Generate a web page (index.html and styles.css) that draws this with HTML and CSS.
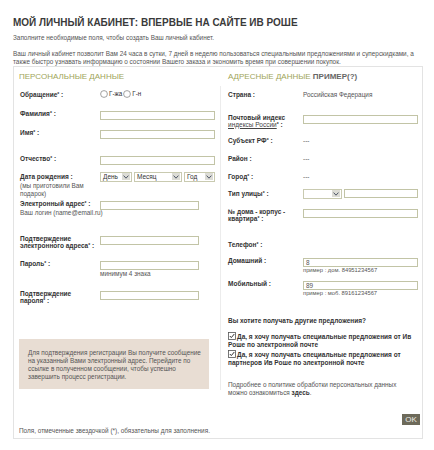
FILE: index.html
```html
<!DOCTYPE html>
<html lang="ru">
<head>
<meta charset="utf-8">
<title>Мой личный кабинет</title>
<link rel="stylesheet" href="styles.css">
</head>
<body>
<div class="page">
  <h1 class="title">МОЙ ЛИЧНЫЙ КАБИНЕТ: ВПЕРВЫЕ НА САЙТЕ ИВ РОШЕ</h1>
  <p class="lead">Заполните необходимые поля, чтобы создать Ваш личный кабинет.</p>
  <p class="intro">Ваш личный кабинет позволит Вам 24 часа в сутки, 7 дней в неделю пользоваться специальными предложениями и суперскидками, а<br>также быстро узнавать информацию о состоянии Вашего заказа и экономить время при совершении покупок.</p>
  <form class="card">
    <div class="heads">
      <h2 class="sec sec-left">ПЕРСОНАЛЬНЫЕ ДАННЫЕ</h2>
      <h2 class="sec sec-right">АДРЕСНЫЕ ДАННЫЕ <span class="sec-ex">ПРИМЕР(?)</span></h2>
    </div>
    <div class="cols">
      <div class="col col-left">
        <div class="row r-sal">
          <div class="lbl">Обращение<span class="req">*</span> :</div>
          <div class="radios">
            <span class="radio"><svg width="8" height="8" viewBox="0 0 8 8"><circle cx="4" cy="4" r="3.4" fill="#fff" stroke="#8a8a8a" stroke-width="0.8"/></svg>Г-жа</span>
            <span class="radio"><svg width="8" height="8" viewBox="0 0 8 8"><circle cx="4" cy="4" r="3.4" fill="#fff" stroke="#8a8a8a" stroke-width="0.8"/></svg>Г-н</span>
          </div>
        </div>
        <div class="row r-last">
          <div class="lbl">Фамилия<span class="req">*</span> :</div>
          <div class="inp w-full"></div>
        </div>
        <div class="row r-first">
          <div class="lbl">Имя<span class="req">*</span> :</div>
          <div class="inp w-full"></div>
        </div>
        <div class="row r-middle">
          <div class="lbl">Отчество<span class="req">*</span> :</div>
          <div class="inp w-full"></div>
        </div>
        <div class="row r-birth">
          <div>
            <div class="lbl">Дата рождения :</div>
            <div class="sub">(мы приготовили Вам<br>подарок)</div>
          </div>
          <div class="sels">
            <div class="sel w-day"><span>День</span><span class="arr"><svg width="6" height="4" viewBox="0 0 6 4"><polyline points="0.6,0.6 3,3.2 5.4,0.6" fill="none" stroke="#4d5566" stroke-width="1"/></svg></span></div>
            <div class="sel w-month"><span>Месяц</span><span class="arr"><svg width="6" height="4" viewBox="0 0 6 4"><polyline points="0.6,0.6 3,3.2 5.4,0.6" fill="none" stroke="#4d5566" stroke-width="1"/></svg></span></div>
            <div class="sel w-year"><span>Год</span><span class="arr"><svg width="6" height="4" viewBox="0 0 6 4"><polyline points="0.6,0.6 3,3.2 5.4,0.6" fill="none" stroke="#4d5566" stroke-width="1"/></svg></span></div>
          </div>
        </div>
        <div class="row r-email">
          <div>
            <div class="lbl">Электронный адрес<span class="req">*</span> :</div>
            <div class="sub sub-login">Ваш логин (name@email.ru)</div>
          </div>
          <div class="inp w-short"></div>
        </div>
        <div class="row r-email2">
          <div class="lbl">Подтверждение<br>электронного адреса<span class="req">*</span> :</div>
          <div class="inp w-short"></div>
        </div>
        <div class="row r-pass">
          <div class="lbl">Пароль<span class="req">*</span> :</div>
          <div>
            <div class="inp w-short"></div>
            <div class="sub sub-min">минимум 4 знака</div>
          </div>
        </div>
        <div class="row r-pass2">
          <div class="lbl">Подтверждение<br>пароля<span class="req">*</span> :</div>
          <div class="inp w-short"></div>
        </div>
        <div class="notice">Для подтверждения регистрации Вы получите сообщение<br>на указанный Вами электронный адрес. Перейдите по<br>ссылке в полученном сообщении, чтобы успешно<br>завершить процесс регистрации.</div>
      </div>
      <div class="col col-right">
        <div class="row r-country">
          <div class="lbl">Страна :</div>
          <div class="val">Российская Федерация</div>
        </div>
        <div class="row r-zip">
          <div class="lbl">Почтовый индекс<br><a class="lnk">индексы России</a><span class="req">*</span> :</div>
          <div class="inp w-full"></div>
        </div>
        <div class="row r-region">
          <div class="lbl">Субъект РФ<span class="req">*</span> :</div>
          <div class="val">---</div>
        </div>
        <div class="row r-district">
          <div class="lbl">Район :</div>
          <div class="val">---</div>
        </div>
        <div class="row r-city">
          <div class="lbl">Город<span class="req">*</span> :</div>
          <div class="val">---</div>
        </div>
        <div class="row r-street">
          <div class="lbl">Тип улицы<span class="req">*</span> :</div>
          <div class="sels">
            <div class="sel w-type"><span></span><span class="arr"><svg width="6" height="4" viewBox="0 0 6 4"><polyline points="0.6,0.6 3,3.2 5.4,0.6" fill="none" stroke="#4d5566" stroke-width="1"/></svg></span></div>
            <div class="inp w-street"></div>
          </div>
        </div>
        <div class="row r-house">
          <div class="lbl">№ дома - корпус -<br>квартира<span class="req">*</span> :</div>
          <div class="inp w-full"></div>
        </div>
        <div class="row r-phone">
          <div class="lbl">Телефон<span class="req">*</span> :</div>
        </div>
        <div class="row r-home">
          <div class="lbl">Домашний :</div>
          <div>
            <div class="inp w-full">8</div>
            <div class="hint">пример : дом. 84951234567</div>
          </div>
        </div>
        <div class="row r-mobile">
          <div class="lbl">Мобильный :</div>
          <div>
            <div class="inp w-full">89</div>
            <div class="hint">пример : моб. 89161234567</div>
          </div>
        </div>
        <div class="offers-q">Вы хотите получать другие предложения?</div>
        <div class="opt"><svg class="cb" width="8" height="8" viewBox="0 0 8 8"><rect x="0.5" y="0.5" width="7" height="7" fill="#fff" stroke="#555" stroke-width="0.8"/><polyline points="1.8,4 3.3,5.6 6.3,2" fill="none" stroke="#333" stroke-width="1"/></svg>Да, я хочу получать специальные предложения от Ив<br>Роше по электронной почте</div>
        <div class="opt"><svg class="cb" width="8" height="8" viewBox="0 0 8 8"><rect x="0.5" y="0.5" width="7" height="7" fill="#fff" stroke="#555" stroke-width="0.8"/><polyline points="1.8,4 3.3,5.6 6.3,2" fill="none" stroke="#333" stroke-width="1"/></svg>Да, я хочу получать специальные предложения от<br>партнеров Ив Роше по электронной почте</div>
        <div class="policy">Подробнее о политике обработки персональных данных<br>можно ознакомиться <b>здесь</b>.</div>
      </div>
    </div>
    <div class="foot">
      <button type="button" class="ok">OK</button>
    </div>
    <div class="note">Поля, отмеченные звездочкой (*), обязательны для заполнения.</div>
  </form>
</div>
</body>
</html>
```
FILE: styles.css
```css
* { box-sizing: border-box; }
html, body { margin: 0; padding: 0; background: #fff; }
body {
  font-family: "Liberation Sans", Arial, sans-serif;
  font-size: 6.4px;
  line-height: 8px;
  color: #555;
}
.page { padding: 16px 0 0 13px; width: 434px; }
.title {
  margin: 0;
  font-size: 10px;
  line-height: 13px;
  font-weight: bold;
  color: #3a3a3a;
}
.lead { margin: 5px 0 0; white-space: nowrap; }
.intro { margin: 7.5px 0 0; white-space: nowrap; }
.card {
  width: 410px;
  margin: 0;
  border: 1px solid #e3e3e3;
}
.heads {
  display: grid;
  grid-template-columns: 207px 1fr;
  padding-top: 5px;
}
.sec {
  margin: 0;
  font-size: 8px;
  line-height: 10px;
  font-weight: normal;
  color: #a0a55a;
  white-space: nowrap;
}
.sec-left { padding-left: 5px; }
.sec-right { padding-left: 7px; }
.sec-ex { color: #666; font-weight: bold; }
.cols {
  display: grid;
  grid-template-columns: 207px 1fr;
  align-items: start;
  margin-top: 4px;
}
.col-left {
  padding: 5px 0 1px 6px;
  border-right: 1px solid #ececec;
}
.col-right { padding: 5px 0 0 7px; }
.row {
  display: grid;
  grid-template-columns: 80px 115px;
  align-items: start;
}
.col-right .row { grid-template-columns: 75px 115px; }
.lbl {
  font-weight: bold;
  font-size: 6.5px;
  line-height: 7px;
  color: #333;
  white-space: nowrap;
}
.req { font-size: 5px; vertical-align: 1px; line-height: 0; }
.lnk { font-weight: normal; color: #444; text-decoration: underline; }
.inp {
  display: block;
  height: 9px;
  margin-top: 1px;
  border: 1px solid #c2c4a6;
  background: #fff;
  padding-left: 2px;
  font-size: 6.4px;
  line-height: 7px;
  color: #555;
}
.w-full { width: 115px; }
.w-short { width: 99px; }
.w-street { width: 74px; margin-top: 0; }
.radios { display: flex; gap: 1px; align-items: center; margin-top: -0.5px; font-size: 6.3px; color: #333; }
.radio { display: inline-flex; align-items: center; gap: 1px; }
.radio svg { display: block; }
.sels { display: flex; gap: 2px; margin-top: -1px; }
.sel {
  display: flex;
  align-items: center;
  justify-content: space-between;
  height: 10px;
  border: 1px solid #c9cab0;
  background: #fff;
  padding: 0 1px 0 2px;
  font-size: 6.5px;
  color: #333;
}
.w-day { width: 32px; }
.w-month { width: 48px; }
.w-year { width: 31px; }
.w-type { width: 39px; }
.arr {
  width: 8px;
  height: 7px;
  background: #dcdcd6;
  display: flex;
  align-items: center;
  justify-content: center;
}
.arr svg { display: block; }
.sub { margin-top: 2px; color: #555; white-space: nowrap; }
.sub-login { margin-top: 2.5px; }
.sub-min { margin-top: 0; }
.hint { font-size: 5.8px; line-height: 7px; color: #555; white-space: nowrap; }
.val { color: #555; white-space: nowrap; }
.r-sal { height: 19px; }
.r-last { height: 19px; }
.r-first { height: 26px; }
.r-middle { height: 18px; }
.r-birth { height: 27px; }
.r-email { height: 35px; }
.r-email2 { height: 25px; }
.r-pass { height: 30px; }
.r-pass2 { height: 49px; }
.r-country { height: 23px; }
.r-zip { height: 23px; }
.r-region { height: 18px; }
.r-district { height: 18px; }
.r-city { height: 17px; }
.r-street { height: 18px; }
.r-house { height: 33px; }
.r-phone { height: 16px; }
.r-home { height: 23px; }
.r-mobile { height: 37px; }
.notice {
  width: 190px;
  margin-left: -1px;
  background: #e8ddd3;
  padding: 10px 0 8px 9px;
  color: #555;
  white-space: nowrap;
}
.offers-q { font-weight: bold; font-size: 6.5px; line-height: 8px; color: #333; white-space: nowrap; }
.opt {
  margin-top: 7px;
  font-weight: bold;
  font-size: 6.5px;
  line-height: 8.5px;
  color: #333;
  white-space: nowrap;
}
.opt + .opt { margin-top: 0; }
.cb { vertical-align: -1px; margin-right: 1px; }
.policy { margin-top: 13px; color: #555; white-space: nowrap; }
.policy b { color: #333; }
.foot {
  display: flex;
  justify-content: flex-end;
  padding-right: 2px;
  margin-top: 17px;
}
.ok {
  width: 18px;
  height: 11px;
  padding: 0;
  border: 0;
  background: #6d6a5a;
  color: #eeeee6;
  font-family: "Liberation Sans", Arial, sans-serif;
  font-size: 8px;
  line-height: 11px;
  text-align: center;
}
.note { margin: 2px 0 0 5px; padding-bottom: 3px; white-space: nowrap; }
```
